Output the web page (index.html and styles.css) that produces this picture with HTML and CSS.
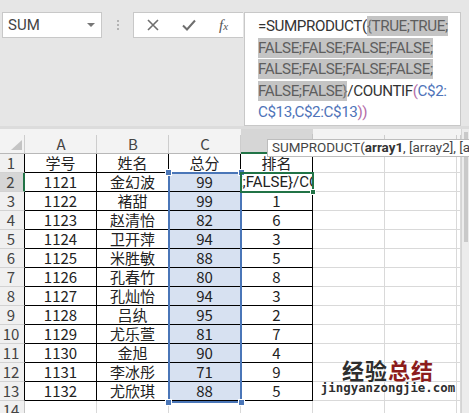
FILE: index.html
```html
<!DOCTYPE html>
<html>
<head>
<meta charset="utf-8">
<link rel="stylesheet" href="styles.css">
</head>
<body>
<div class="top">
  <div class="namebox"><span>SUM</span><span class="arrow"></span></div>
  <div class="sep"><i></i><i></i><i></i></div>
  <div class="btns">
    <svg class="ico" width="14" height="14" viewBox="0 0 14 14"><path d="M2 2 L12 12 M12 2 L2 12" stroke="#6e6e6e" stroke-width="1.6" fill="none"/></svg>
    <svg class="ico" width="16" height="14" viewBox="0 0 16 14"><path d="M2 7.5 L6 11.5 L14 2.5" stroke="#6e6e6e" stroke-width="2" fill="none"/></svg>
    <span class="fx">f<small>x</small></span>
  </div>
  <div class="formula"><span>=SUMPRODUCT(</span><span class="hl"><span class="lt">{</span>TRUE;TRUE;<br>FALSE;FALSE;FALSE;FALSE;<br>FALSE;FALSE;FALSE;FALSE;<br>FALSE;FALSE<span class="lt">}</span></span>/COUNTIF<span class="pk">(</span><span class="bl">C$2:<br>C$13,C$2:C$13</span><span class="pk">)</span><span class="pk">)</span></div>
</div>
<div class="band"></div>
<div class="main">
  <div class="sheet">
    <div class="hd corner"><span class="tri"></span></div><div class="hd">A</div><div class="hd">B</div><div class="hd">C</div><div class="hd hdsel"></div><div class="hd"></div><div class="hd"></div><div class="hd"></div>

    <div class="rh rb">1</div><div class="c t">学号</div><div class="c t">姓名</div><div class="c t">总分</div><div class="c t">排名</div><div class="c"></div><div class="c"></div><div class="c"></div>
    <div class="rh rhsel">2</div><div class="c t">1121</div><div class="c t">金幻波</div><div class="c t s">99</div><div class="c t clip"><span>E;FALSE}/COUNTIF(</span></div><div class="c"></div><div class="c"></div><div class="c"></div>
    <div class="rh rb">3</div><div class="c t">1122</div><div class="c t">褚甜</div><div class="c t s">99</div><div class="c t">1</div><div class="c"></div><div class="c"></div><div class="c"></div>
    <div class="rh rb">4</div><div class="c t">1123</div><div class="c t">赵清怡</div><div class="c t s">82</div><div class="c t">6</div><div class="c"></div><div class="c"></div><div class="c"></div>
    <div class="rh rb">5</div><div class="c t">1124</div><div class="c t">卫开萍</div><div class="c t s">94</div><div class="c t">3</div><div class="c"></div><div class="c"></div><div class="c"></div>
    <div class="rh rb">6</div><div class="c t">1125</div><div class="c t">米胜敏</div><div class="c t s">88</div><div class="c t">5</div><div class="c"></div><div class="c"></div><div class="c"></div>
    <div class="rh rb">7</div><div class="c t">1126</div><div class="c t">孔春竹</div><div class="c t s">80</div><div class="c t">8</div><div class="c"></div><div class="c"></div><div class="c"></div>
    <div class="rh rb">8</div><div class="c t">1127</div><div class="c t">孔灿怡</div><div class="c t s">94</div><div class="c t">3</div><div class="c"></div><div class="c"></div><div class="c"></div>
    <div class="rh rb">9</div><div class="c t">1128</div><div class="c t">吕纨</div><div class="c t s">95</div><div class="c t">2</div><div class="c"></div><div class="c"></div><div class="c"></div>
    <div class="rh rb">10</div><div class="c t">1129</div><div class="c t">尤乐萱</div><div class="c t s">81</div><div class="c t">7</div><div class="c"></div><div class="c"></div><div class="c"></div>
    <div class="rh rb">11</div><div class="c t">1130</div><div class="c t">金旭</div><div class="c t s">90</div><div class="c t">4</div><div class="c"></div><div class="c"></div><div class="c"></div>
    <div class="rh rb">12</div><div class="c t">1131</div><div class="c t">李冰彤</div><div class="c t s">71</div><div class="c t">9</div><div class="c"></div><div class="c"></div><div class="c"></div>
    <div class="rh rb">13</div><div class="c t">1132</div><div class="c t">尤欣琪</div><div class="c t s">88</div><div class="c t">5</div><div class="c"></div><div class="c"></div><div class="c"></div>
    <div class="rh">14</div><div class="c"></div><div class="c"></div><div class="c"></div><div class="c"></div><div class="c"></div><div class="c"></div><div class="c"></div>

    <div class="range"><i class="h tl"></i><i class="h tr"></i><i class="h bl"></i><i class="h br"></i></div>
    <div class="active"><i class="h2"></i></div>
    <div class="tip">SUMPRODUCT(<b>array1</b>, [array2], [a</div>
    <div class="wm"><div class="wm1">经验<em>总结</em></div><div class="wm2">jingyanzongjie.com</div></div>
  </div>
  <div class="vscroll"><div class="thumb"></div></div>
</div>
</body>
</html>
```

FILE: styles.css
```css
html, body {
  margin: 0;
  padding: 0;
}
body {
  width: 469px;
  height: 413px;
  overflow: hidden;
  background: #e6e6e6;
  font-family: Roboto, "Noto Sans CJK SC", sans-serif;
  color: #333;
}
.top {
  height: 126px;
  display: flex;
  align-items: flex-start;
  padding: 12px 0 0 2px;
  box-sizing: border-box;
}
.namebox {
  width: 100px;
  height: 26px;
  box-sizing: border-box;
  background: #fff;
  border: 1px solid #c8c8c8;
  display: flex;
  align-items: center;
  justify-content: space-between;
  padding: 0 6px 0 5px;
  font-size: 15px;
  color: #444;
}
.arrow {
  width: 0;
  height: 0;
  border-left: 4px solid transparent;
  border-right: 4px solid transparent;
  border-top: 4px solid #777;
}
.sep {
  width: 31px;
  height: 26px;
  display: flex;
  flex-direction: column;
  align-items: center;
  justify-content: center;
  gap: 2px;
}
.sep i {
  display: block;
  width: 2px;
  height: 2px;
  background: #b3b3b3;
}
.btns {
  width: 110px;
  height: 26px;
  box-sizing: border-box;
  background: #fff;
  border: 1px solid #c8c8c8;
  border-right: none;
  display: flex;
  align-items: center;
  padding-left: 12px;
  gap: 21px;
}
.fx {
  font-family: "Liberation Serif", serif;
  font-style: italic;
  font-size: 15px;
  color: #555;
  margin-left: 1px;
}
.fx small {
  font-size: 11px;
}
.formula {
  width: 217px;
  height: 114px;
  box-sizing: border-box;
  margin-left: 1px;
  background: #fff;
  border: 1px solid #c8c8c8;
  padding: 3px 0 0 13px;
  font-family: Roboto, sans-serif;
  font-size: 15.2px;
  letter-spacing: -0.4px;
  line-height: 21.6px;
  color: #333;
  white-space: nowrap;
}
.hl {
  background: #c4c4c4;
  color: #5e5e5e;
  padding: 1px 0;
}
.lt { color: #777; }
.pk { color: #b46ca8; }
.bl { color: #4f74b9; }
.band {
  height: 3px;
  background: #dcdcdc;
}
.main {
  display: flex;
  height: 284px;
}
.sheet {
  position: relative;
  display: grid;
  grid-template-columns: 25px repeat(6, 72px) 4px;
  grid-template-rows: 25px repeat(14, 19px);
  background: #fff;
  font-family: "Noto Sans CJK SC", sans-serif;
  font-size: 15px;
  color: #222;
}
.hd {
  box-sizing: border-box;
  background: #f3f3f3 linear-gradient(#cdcdcd, #cdcdcd) right bottom / 1px 18px no-repeat;
  border-bottom: 1px solid #b8b8b8;
  display: flex;
  align-items: flex-end;
  justify-content: center;
  line-height: 19px;
  color: #444;
}
.corner {
  position: relative;
}
.tri {
  position: absolute;
  right: 3px;
  bottom: 3px;
  width: 0;
  height: 0;
  border-left: 11px solid transparent;
  border-bottom: 10px solid #c4c4c4;
}
.hdsel {
  background: #d6d6d6 linear-gradient(#c4c4c4, #c4c4c4) right bottom / 1px 18px no-repeat;
  border-bottom: 2px solid #217346;
  line-height: 18px;
}
.rh {
  box-sizing: border-box;
  background: #f0f0f0;
  border-right: 1px solid #c4c4c4;
  border-bottom: 1px solid #d2d2d2;
  display: flex;
  align-items: center;
  justify-content: center;
  line-height: 18px;
  color: #444;
  padding-right: 2px;
}
.rb {
  border-right-color: #000;
}
.rhsel {
  background: #d6d6d6;
  border-right: 2px solid #217346;
}
.c {
  box-sizing: border-box;
  border-right: 1px solid #d9d9d9;
  border-bottom: 1px solid #d9d9d9;
  display: flex;
  align-items: center;
  justify-content: center;
  line-height: 18px;
  white-space: nowrap;
}
.t {
  border-color: #000;
}
.s {
  background: #d7e1f1;
}
.clip {
  justify-content: flex-start;
  overflow: hidden;
}
.clip span {
  margin-left: -7px;
  font-family: Roboto, sans-serif;
  font-size: 15px;
}
.range {
  position: absolute;
  left: 168px;
  top: 43px;
  width: 74px;
  height: 231px;
  box-sizing: border-box;
  border: 2px solid #4a76b8;
}
.h {
  position: absolute;
  width: 5px;
  height: 5px;
  background: #4a76b8;
  border: 1px solid #fff;
}
.tl { left: -5px; top: -5px; }
.tr { right: -5px; top: -5px; }
.bl { left: -5px; bottom: -5px; }
.br { right: -5px; bottom: -5px; }
.active {
  position: absolute;
  left: 240px;
  top: 43px;
  width: 74px;
  height: 21px;
  box-sizing: border-box;
  border: 2px solid #217346;
}
.h2 {
  position: absolute;
  right: -4px;
  bottom: -4px;
  width: 4px;
  height: 4px;
  background: #217346;
  border: 1px solid #fff;
}
.tip {
  position: absolute;
  left: 267px;
  top: 10px;
  height: 18px;
  box-sizing: border-box;
  padding: 0 6px 0 4px;
  background: #fff;
  border: 1px solid #bdbdbd;
  font-family: Roboto, sans-serif;
  font-size: 13.4px;
  line-height: 16px;
  color: #444;
  white-space: nowrap;
}
.tip b {
  font-weight: 700;
  color: #333;
}
.wm {
  position: absolute;
  left: 318px;
  top: 228px;
  width: 140px;
  text-align: center;
}
.wm1 {
  font-family: "Noto Sans CJK SC", sans-serif;
  font-weight: 700;
  font-size: 22px;
  line-height: 24px;
  color: #2e2e2e;
  letter-spacing: 1px;
}
.wm1 em {
  font-style: normal;
  color: #8c1c1c;
}
.wm2 {
  font-family: "DejaVu Sans Mono", monospace;
  font-weight: 700;
  font-size: 12.4px;
  line-height: 14px;
  color: #2e2e2e;
}
.vscroll {
  width: 8px;
  background: #ececec;
  border-left: 1px solid #d4d4d4;
  box-sizing: border-box;
  padding: 3px 1px 0 2px;
}
.thumb {
  height: 110px;
  background: #c9c9c9;
}
```
